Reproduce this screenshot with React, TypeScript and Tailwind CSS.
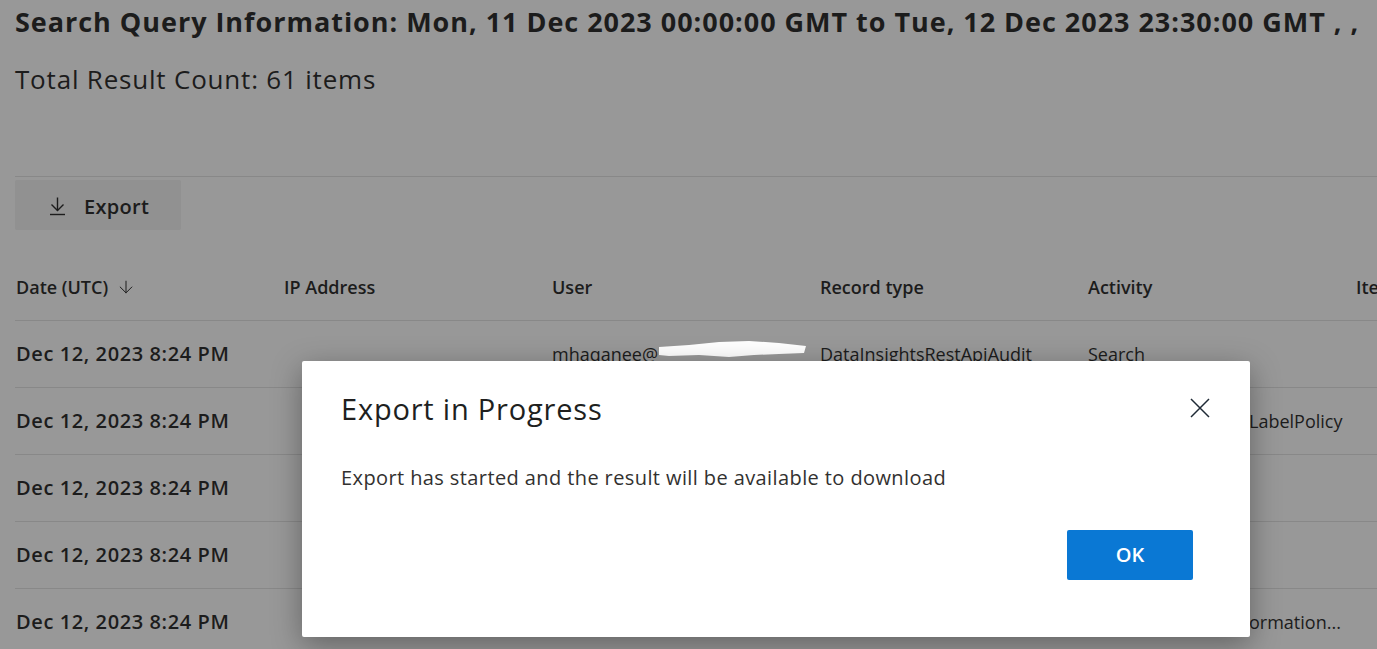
import { ArrowDown } from "lucide-react";

type Row = { date: string; user?: string; record?: string; activity?: string; activityTail?: string };

const rows: Row[] = [
  { date: "Dec 12, 2023 8:24 PM", user: "mhaqanee@", record: "DataInsightsRestApiAudit", activity: "Search" },
  { date: "Dec 12, 2023 8:24 PM", activityTail: "LabelPolicy" },
  { date: "Dec 12, 2023 8:24 PM" },
  { date: "Dec 12, 2023 8:24 PM" },
  { date: "Dec 12, 2023 8:24 PM", activityTail: "ormation..." },
];

const cols = ["IP Address", "User", "Record type", "Activity", "Item"];

// white scribble laid over the e-mail domain in the original capture
function Redaction() {
  return (
    <svg width="148" height="20" viewBox="0 0 148 20" className="absolute left-[107px] top-[-1px]">
      <path d="M0 7 L 30 5 L 60 2 L 90 1 L 120 3 L 147 6 L 145 13 L 120 14 L 95 15 L 70 17 L 40 15 L 10 16 L 0 15 Z" fill="#fff" />
    </svg>
  );
}

function DownloadIcon() {
  return (
    <svg width="17" height="19" viewBox="0 0 17 19" fill="none" stroke="currentColor" strokeWidth="1.4">
      <path d="M8.5 0.5 V 13.5" />
      <path d="M2.5 7.5 L 8.5 13.5 L 14.5 7.5" />
      <path d="M1 17.5 H 16" />
    </svg>
  );
}

export default function App() {
  return (
    <div className="relative h-[649px] w-[1377px] overflow-hidden bg-[#989898] text-[#1c1c1c]" style={{ fontFamily: "'Open Sans', sans-serif" }}>
      <div className="pl-[15px]">
        <h1 className="whitespace-nowrap pt-[4px] text-[27px] font-bold leading-[36px] tracking-[0.97px]">
          Search Query Information: Mon, 11 Dec 2023 00:00:00 GMT to Tue, 12 Dec 2023 23:30:00 GMT , ,
        </h1>
        <div className="mt-[21px] text-[26px] leading-[36px] tracking-[0.8px]">Total Result Count: 61 items</div>

        <div className="mt-[79px] border-t border-[#888]" />
        <button className="mt-[3px] flex h-[50px] w-[166px] items-center gap-[18px] rounded-[2px] bg-[#919191] pl-[34px] text-[20px] font-semibold tracking-[0.3px]">
          <span className="mt-[2px]"><DownloadIcon /></span>
          <span className="mt-[3px]">Export</span>
        </button>

        <div className="mt-[24px] flex h-[67px] items-center border-b border-[#888] text-[18px] font-semibold">
          <div className="flex w-[269px] shrink-0 items-center gap-[8px] pl-[1px]">
            Date (UTC) <ArrowDown size={20} strokeWidth={1.2} />
          </div>
          {cols.map((c) => (
            <div key={c} className="w-[268px] shrink-0 whitespace-nowrap">{c}</div>
          ))}
        </div>

        {rows.map((r, i) => (
          <div key={i} className="flex h-[67px] items-center border-b border-[#888] text-[18px]">
            <div className="w-[269px] shrink-0 pl-[1px] text-[20px] font-semibold tracking-[0.6px]">{r.date}</div>
            <div className="w-[268px] shrink-0" />
            <div className="relative w-[268px] shrink-0 whitespace-nowrap">
              {r.user}
              {r.user && <Redaction />}
            </div>
            <div className="w-[268px] shrink-0 overflow-hidden whitespace-nowrap">{r.record}</div>
            <div className="w-[268px] shrink-0 whitespace-nowrap">
              {r.activityTail ? <span className="pl-[161px]">{r.activityTail}</span> : r.activity}
            </div>
          </div>
        ))}
      </div>

      <div className="absolute left-[302px] top-[361px] flex h-[276px] w-[948px] flex-col rounded-[2px] bg-white pl-[39px] pr-[40px] shadow-[0_8px_30px_rgba(0,0,0,0.35)]">
        <div className="flex items-center justify-between pt-[28px]">
          <h2 className="text-[29px] leading-[40px] tracking-[0.8px] text-[#201f1e]">Export in Progress</h2>
          <svg width="20" height="20" viewBox="0 0 20 20" stroke="#1f2a36" strokeWidth="1.5" className="mt-[-2px]">
            <path d="M1 1 L19 19 M19 1 L1 19" />
          </svg>
        </div>
        <p className="mt-[34px] text-[20px] leading-[30px] tracking-[0.4px] text-[#323130]">
          Export has started and the result will be available to download
        </p>
        <div className="mt-auto flex justify-end pb-[57px] pr-[17px]">
          <button className="h-[50px] w-[126px] rounded-[2px] bg-[#0a78d4] text-[20px] font-semibold text-white">OK</button>
        </div>
      </div>
    </div>
  );
}
